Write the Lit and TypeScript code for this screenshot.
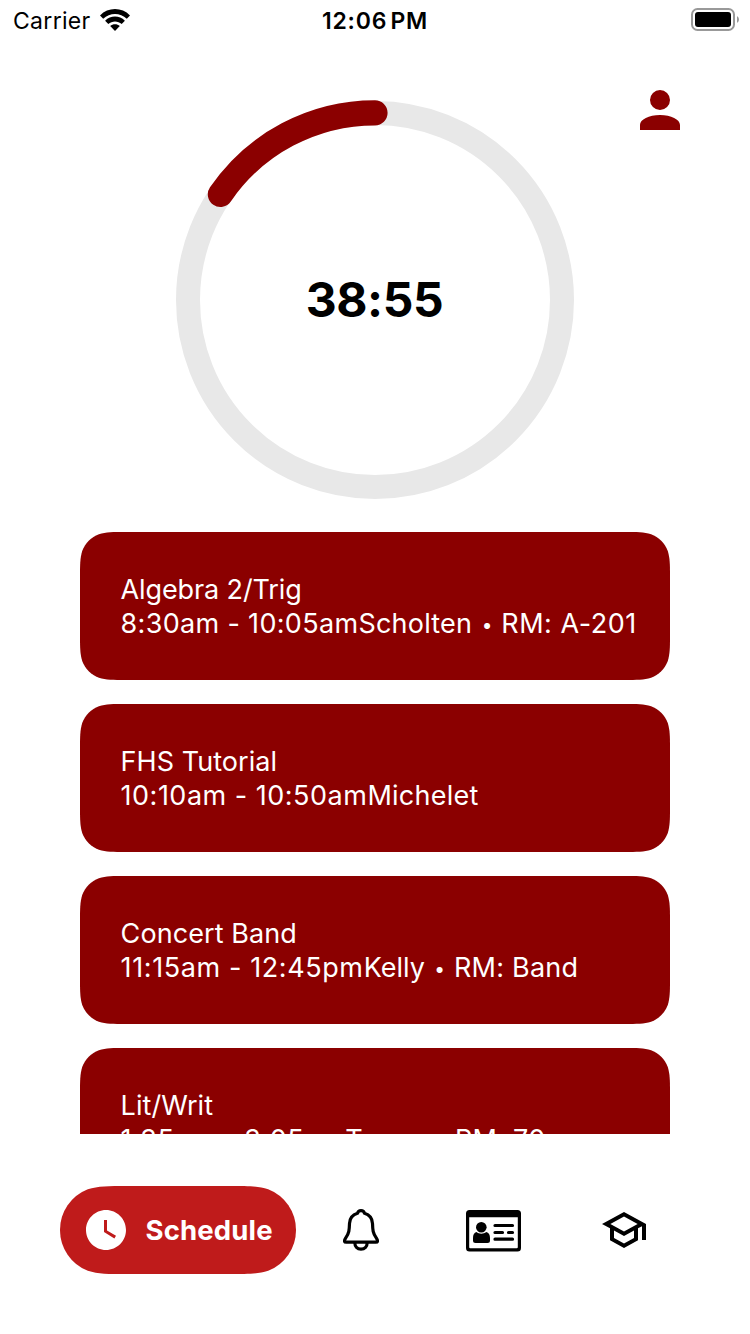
import { LitElement, html, css, svg, nothing } from "lit";
import { customElement, property } from "lit/decorators.js";

interface Run {
  text: string;
  track: number;
}

interface Period {
  title: Run;
  time: Run;
  teacher: Run;
  room?: Run;
}

const PERIODS: Period[] = [
  {
    title: { text: "Algebra 2/Trig", track: -0.12 },
    time: { text: "8:30am - 10:05am", track: 0.32 },
    teacher: { text: "Scholten", track: 0.22 },
    room: { text: "RM: A-201", track: 0.5 },
  },
  {
    title: { text: "FHS Tutorial", track: 0.05 },
    time: { text: "10:10am - 10:50am", track: 0.5 },
    teacher: { text: "Michelet", track: 0.25 },
  },
  {
    title: { text: "Concert Band", track: 0.08 },
    time: { text: "11:15am - 12:45pm", track: 0.6 },
    teacher: { text: "Kelly", track: 0 },
    room: { text: "RM: Band", track: 0.25 },
  },
  {
    title: { text: "Lit/Writ", track: 0.05 },
    time: { text: "1:35pm - 3:05pm", track: 0.46 },
    teacher: { text: "Torres", track: -0.2 },
    room: { text: "RM: 70", track: 0.25 },
  },
];

@customElement("status-bar")
export class StatusBar extends LitElement {
  static styles = css`
    :host {
      display: grid;
      grid-template-columns: 1fr auto 1fr;
      align-items: center;
      height: 40px;
      padding: 0 13px;
      font-size: 23px;
      line-height: 38px;
      color: #000;
    }
    .left {
      display: flex;
      align-items: center;
      gap: 9px;
      letter-spacing: 0.3px;
    }
    .left span,
    .time {
      padding-top: 2px;
    }
    .time {
      font-weight: 600;
      letter-spacing: 0.8px;
      word-spacing: -3.4px;
    }
    .battery {
      justify-self: end;
      margin-right: -2px;
    }
    svg {
      display: block;
    }
  `;
  render() {
    return html`
      <div class="left">
        <span>Carrier</span>
        <svg width="30" height="22" viewBox="0 0 30 22">
          <path d="M0 6.4C8.2-2.1 21.8-2.1 30 6.4L26.8 9.7C20.2 3.3 9.8 3.3 3.2 9.7Z" />
          <path d="M5.1 11.7C10.6 6.2 19.4 6.2 24.9 11.7L21.7 15C17.9 11.5 12.1 11.5 8.3 15Z" />
          <path d="M10.2 17.1C12.9 14.6 17.1 14.6 19.8 17.1L15 22Z" />
        </svg>
      </div>
      <div class="time">12:06 PM</div>
      <svg class="battery" width="48" height="24" viewBox="0 0 48 24">
        <rect x="1" y="1" width="42" height="21" rx="5.5" fill="none" stroke="#999" stroke-width="2" />
        <rect x="4" y="4" width="36" height="15" rx="3" />
        <path d="M46 8.2C48.6 9.4 48.6 13.6 46 14.8Z" fill="#999" />
      </svg>
    `;
  }
}

@customElement("countdown-ring")
export class CountdownRing extends LitElement {
  @property() label = "";
  static styles = css`
    :host {
      display: grid;
      place-items: center;
      width: 400px;
      height: 400px;
    }
    svg,
    .label {
      grid-area: 1 / 1;
    }
    .label {
      font-size: 48px;
      font-weight: 700;
      line-height: 60px;
      letter-spacing: -0.4px;
      margin-right: 1px;
    }
  `;
  render() {
    return html`
      <svg width="400" height="400" viewBox="0 0 400 400" fill="none">
        <circle cx="200" cy="200" r="187" stroke="#e8e8e8" stroke-width="24" />
        <path d="M45.4 94.4A187.2 187.2 0 0 1 200 12.8" stroke="#8b0000" stroke-width="25.2" stroke-linecap="round" />
      </svg>
      <div class="label">${this.label}</div>
    `;
  }
}

@customElement("period-card")
export class PeriodCard extends LitElement {
  @property({ attribute: false }) period!: Period;
  static styles = css`
    :host {
      display: flex;
      flex-direction: column;
      justify-content: center;
      flex: none;
      box-sizing: border-box;
      height: 148px;
      padding: 1px 0 0 40.6px;
      background: #8b0000;
      color: #fff;
      font-size: 27px;
      line-height: 34px;
      white-space: pre;
      clip-path: path(
        "M45.9 0H544.1C557.3 0 563.9 0 571.1 2.2C578.8 5.1 584.9 11.2 587.8 18.9C590 26.1 590 32.7 590 45.9V102.1C590 115.3 590 121.9 587.8 129.1C584.9 136.8 578.8 142.9 571.1 145.8C563.9 148 557.3 148 544.1 148H45.9C32.7 148 26.1 148 18.9 145.8C11.2 142.9 5.1 136.8 2.2 129.1C0 121.9 0 115.3 0 102.1V45.9C0 32.7 0 26.1 2.2 18.9C5.1 11.2 11.2 5.1 18.9 2.2C26.1 0 32.7 0 45.9 0Z"
      );
    }
    .dot {
      font-size: 19px;
      line-height: 0;
      vertical-align: 1px;
      margin: 0 1.4px 0 1.8px;
    }
  `;
  private run(r: Run) {
    return html`<span style="letter-spacing:${r.track}px">${r.text}</span>`;
  }
  render() {
    const { title, time, teacher, room } = this.period;
    return html`<div>${this.run(title)}</div><div>${this.run(time)}${this.run(teacher)}${room
      ? html`<span> <span class="dot">•</span> </span>${this.run(room)}`
      : nothing}</div>`;
  }
}

const bell = svg`
  <g fill="none" stroke="#000" stroke-width="3.2" stroke-linejoin="round">
    <path d="M18 1.6C16 1.6 14.9 2.7 14.5 4.3C9 6 6.7 9.5 6.5 14.5C6.3 21 6.2 24 2.6 29.2C.8 32 1.2 33.2 3.2 33.2H32.8C34.8 33.2 35.2 32 33.4 29.2C29.8 24 29.7 21 29.5 14.5C29.3 9.5 27 6 21.5 4.3C21.1 2.7 20 1.6 18 1.6Z"/>
    <path d="M11.8 33.5C11.8 37.5 14.3 40.1 18 40.1S24.2 37.5 24.2 33.5"/>
  </g>`;

const idCard = svg`
  <path fill-rule="evenodd" d="M3.5 0H51.5A3.5 3.5 0 0 1 55 3.5V38A3.5 3.5 0 0 1 51.5 41.5H3.5A3.5 3.5 0 0 1 0 38V3.5A3.5 3.5 0 0 1 3.5 0ZM3.2 7.2V37.2Q3.2 38.3 4.3 38.3H50.7Q51.8 38.3 51.8 37.2V7.2Z"/>
  <circle cx="15.3" cy="17.3" r="5.3"/>
  <path d="M10.5 22C13 24.2 17.6 24.2 20.2 22C22.8 22.4 24 25 24 28V30.5Q24 33 21.5 33H9.5Q7 33 7 30.5V28C7 25 8.2 22.4 10.5 22Z"/>
  <path d="M29 15.5H46.5M29 22.5H36.5M42.5 22.5H46.5M29 29.2H46.5" stroke="#000" stroke-width="3.2" stroke-linecap="round"/>`;

@customElement("tab-bar")
export class TabBar extends LitElement {
  static styles = css`
    :host {
      display: flex;
      align-items: center;
      box-sizing: border-box;
      height: 200px;
      padding: 0 104px 8px 60px;
    }
    .active {
      display: flex;
      align-items: center;
      box-sizing: border-box;
      width: 236px;
      height: 88px;
      padding-left: 22px;
      gap: 15.5px;
      background: #bf1b1b;
      color: #fff;
      font-size: 27.5px;
      font-weight: 700;
      letter-spacing: 0.15px;
      clip-path: path(
        "M67.3 0H168.7C188.1 0 197.8 0 208.2 3.3A43.69 43.69 0 0 1 208.2 84.7C197.8 88 188.1 88 168.7 88H67.3C47.9 88 38.2 88 27.8 84.7A43.69 43.69 0 0 1 27.8 3.3C38.2 0 47.9 0 67.3 0Z"
      );
    }
    svg {
      display: block;
      flex: none;
    }
    .tabs {
      display: flex;
      flex: 1;
      align-items: center;
      justify-content: space-between;
      padding-left: 47px;
    }
    .id {
      margin: 2px 0 0 6px;
    }
  `;
  render() {
    return html`
      <div class="active">
        <svg width="48" height="48" viewBox="0 0 24 24" fill="#fff">
          <path d="M12 2C6.5 2 2 6.5 2 12S6.5 22 12 22 22 17.5 22 12 17.5 2 12 2M16.2 16.2L11 13V7H12.5V12.2L17 14.9L16.2 16.2Z" />
        </svg>
        <span>Schedule</span>
      </div>
      <div class="tabs">
        <svg width="36" height="42" viewBox="0 0 36 42">${bell}</svg>
        <svg class="id" width="55" height="42" viewBox="0 0 55 42">${idCard}</svg>
        <svg width="44" height="48" viewBox="1 0 22 24">
          <path d="M12 3L1 9L5 11.18V17.18L12 21L19 17.18V11.18L21 10.09V17H23V9L12 3M18.82 9L12 12.72L5.18 9L12 5.28L18.82 9M17 16L12 18.72L7 16V12.27L12 15L17 12.27V16Z" />
        </svg>
      </div>
    `;
  }
}

@customElement("app-root")
export class AppRoot extends LitElement {
  static styles = css`
    :host {
      display: flex;
      flex-direction: column;
      width: 750px;
      height: 1334px;
      overflow: hidden;
      background: #fff;
      color: #000;
      font-family: Inter, "Liberation Sans", sans-serif;
    }
    .hero {
      display: grid;
      grid-template-columns: 1fr 400px 1fr;
      height: 432px;
      padding-top: 60px;
      flex: none;
    }
    countdown-ring {
      grid-column: 2;
    }
    .profile {
      display: block;
      justify-self: end;
      margin: -20px 60px 0 0;
    }
    .list {
      display: flex;
      flex-direction: column;
      gap: 24px;
      flex: 1;
      min-height: 0;
      overflow: hidden;
      margin: 0 80px;
    }
    tab-bar,
    status-bar {
      flex: none;
    }
  `;
  render() {
    return html`
      <status-bar></status-bar>
      <div class="hero">
        <countdown-ring label="38:55"></countdown-ring>
        <svg class="profile" width="60" height="60" viewBox="0 0 24 24" fill="#8b0000">
          <path d="M12,4A4,4 0 0,1 16,8A4,4 0 0,1 12,12A4,4 0 0,1 8,8A4,4 0 0,1 12,4M12,14C16.42,14 20,15.79 20,18V20H4V18C4,15.79 7.58,14 12,14Z" />
        </svg>
      </div>
      <div class="list">
        ${PERIODS.map((p) => html`<period-card .period=${p}></period-card>`)}
      </div>
      <tab-bar></tab-bar>
    `;
  }
}
